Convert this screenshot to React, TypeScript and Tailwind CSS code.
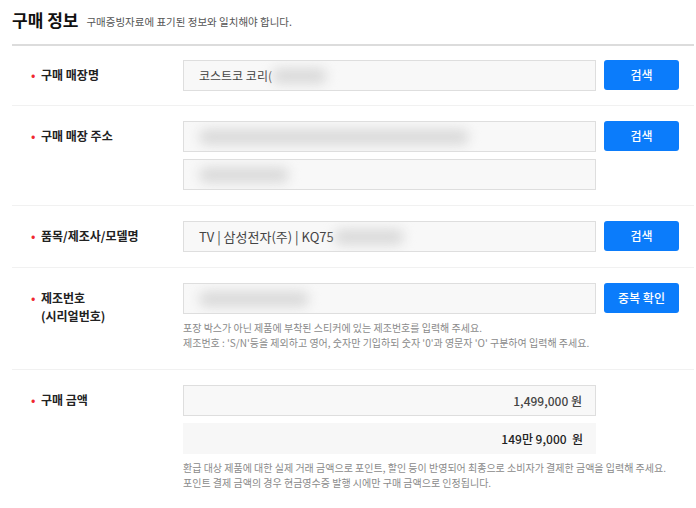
import React from "react";

const font = { fontFamily: '"Noto Sans CJK KR", "Noto Sans", sans-serif' };

function Label({ children }: { children: React.ReactNode }) {
  return (
    <div className="w-[171px] shrink-0 pl-[19px] pt-[6px] flex items-start">
      <span className="text-[#f0282f] text-[13px] leading-[18px] w-[10px]">•</span>
      <span className="text-[12px] leading-[18px] font-bold text-[#222]">{children}</span>
    </div>
  );
}

function Btn({ children }: { children: React.ReactNode }) {
  return (
    <button className="ml-[8px] w-[75px] h-[30px] shrink-0 rounded-[3px] bg-[#0b7cfb] text-white text-[12px] font-medium">
      {children}
    </button>
  );
}

function Blur({ w }: { w: number }) {
  return <span className="inline-block h-[16px] rounded-full bg-[#dadada] blur-[6px] align-middle" style={{ width: w }} />;
}

function Field({ children, className = "" }: { children?: React.ReactNode; className?: string }) {
  return (
    <div className={`w-[413px] h-[31px] border border-[#dedede] bg-[#f8f8f8] flex items-center pl-[15px] text-[12px] text-[#444] overflow-hidden ${className}`}>
      {children}
    </div>
  );
}

function Help({ lines }: { lines: string[] }) {
  return (
    <div className="mt-[6px] text-[10px] leading-[15px] text-[#8a8a8a]">
      {lines.map((l) => (
        <p key={l}>{l}</p>
      ))}
    </div>
  );
}

export default function App() {
  return (
    <div className="w-[696px] h-[508px] bg-white overflow-hidden" style={font}>
      <div className="ml-[12px] mr-[2px]">
        <div className="flex items-end h-[46px] pb-[13px] border-b-2 border-[#dcdcdc]">
          <h2 className="text-[17px] leading-[22px] font-bold text-[#111]">구매 정보</h2>
          <span className="ml-[8px] text-[10.5px] leading-[16px] text-[#555] mb-[1px]">구매증빙자료에 표기된 정보와 일치해야 합니다.</span>
        </div>

        <div className="flex py-[14px] border-b border-[#f1f1f1]">
          <Label>구매 매장명</Label>
          <Field>
            <span>코스트코 코리(</span>
            <Blur w={55} />
          </Field>
          <Btn>검색</Btn>
        </div>

        <div className="flex pt-[15px] pb-[15px] border-b border-[#f1f1f1]">
          <Label>구매 매장 주소</Label>
          <div className="flex flex-col gap-[7px]">
            <Field className="pl-[10px]">
              <Blur w={270} />
            </Field>
            <Field className="pl-[10px]">
              <Blur w={90} />
            </Field>
          </div>
          <Btn>검색</Btn>
        </div>

        <div className="flex py-[15px] border-b border-[#f1f1f1]">
          <Label>품목/제조사/모델명</Label>
          <Field className="text-[13px] text-[#333]">
            <span>TV | 삼성전자(주) | KQ75</span>
            <Blur w={70} />
          </Field>
          <Btn>검색</Btn>
        </div>

        <div className="flex pt-[15px] pb-[19px] border-b border-[#f1f1f1]">
          <Label>
            제조번호
            <br />
            (시리얼번호)
          </Label>
          <div>
            <Field className="pl-[8px]">
              <Blur w={110} />
            </Field>
            <Help
              lines={[
                "포장 박스가 아닌 제품에 부착된 스티커에 있는 제조번호를 입력해 주세요.",
                "제조번호 : 'S/N'등을 제외하고 영어, 숫자만 기입하되 숫자 '0'과 영문자 'O' 구분하여 입력해 주세요.",
              ]}
            />
          </div>
          <Btn>중복 확인</Btn>
        </div>

        <div className="flex pt-[15px]">
          <Label>구매 금액</Label>
          <div>
            <Field className="justify-end pr-[13px] text-[#222] font-medium">1,499,000 원</Field>
            <div className="mt-[7px] w-[413px] h-[31px] bg-[#f7f7f7] flex items-center justify-end pr-[13px] text-[12px] text-[#222] font-medium whitespace-pre">
              149만 9,000  원
            </div>
            <Help
              lines={[
                "환급 대상 제품에 대한 실제 거래 금액으로 포인트, 할인 등이 반영되어 최종으로 소비자가 결제한 금액을 입력해 주세요.",
                "포인트 결제 금액의 경우 현금영수증 발행 시에만 구매 금액으로 인정됩니다.",
              ]}
            />
          </div>
        </div>
      </div>
    </div>
  );
}
